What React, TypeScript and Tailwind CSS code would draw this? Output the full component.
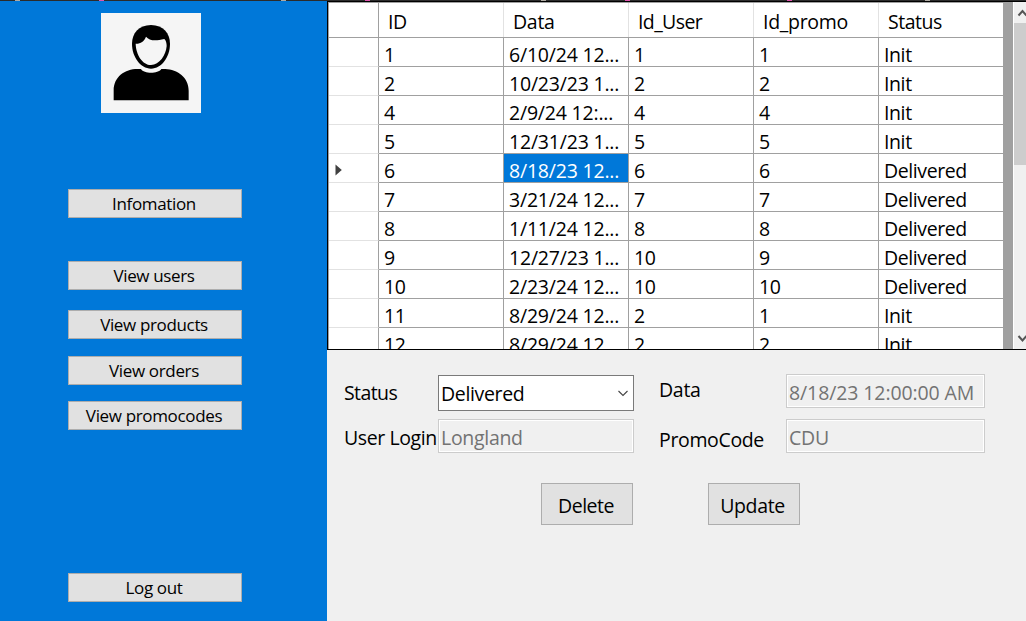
type Order = [string, string, string, string, string];

const columns = [
  { label: "ID", tracking: "tracking-[-0.4px]" },
  { label: "Data", tracking: "tracking-[-0.3px]" },
  { label: "Id_User", tracking: "tracking-[-0.6px]" },
  { label: "Id_promo", tracking: "tracking-[-0.3px]" },
  { label: "Status", tracking: "tracking-[-0.5px]" },
];

const orders: Order[] = [
  ["1", "6/10/24 12...", "1", "1", "Init"],
  ["2", "10/23/23 1...", "2", "2", "Init"],
  ["4", "2/9/24 12:...", "4", "4", "Init"],
  ["5", "12/31/23 1...", "5", "5", "Init"],
  ["6", "8/18/23 12...", "6", "6", "Delivered"],
  ["7", "3/21/24 12...", "7", "7", "Delivered"],
  ["8", "1/11/24 12...", "8", "8", "Delivered"],
  ["9", "12/27/23 1...", "10", "9", "Delivered"],
  ["10", "2/23/24 12...", "10", "10", "Delivered"],
  ["11", "8/29/24 12...", "2", "1", "Init"],
  ["12", "8/29/24 12...", "2", "2", "Init"],
];

const SELECTED_ROW = 4;

function Avatar() {
  return (
    <svg className="mt-3 mr-2 size-[100px] bg-[#f5f5f5]" viewBox="303 39 300 300">
      <path d="M453 75C490 75 510 100 510 132C510 170 485 206 453 206C421 206 396 170 396 132C396 100 416 75 453 75Z" />
      <path fill="#f5f5f5" d="M407 131C420 132 433 124 438 110C448 122 465 124 493 117C498 121 500 130 500 138C498 165 478 195 453 195C428 195 408 165 407 131Z" />
      <path d="M341 301V272C341 230 375 207 412 207H423C432 222 474 222 484 207H496C532 208 566 232 566 272V301Z" />
    </svg>
  );
}

function NavButton({ label, className }: { label: string; className: string }) {
  return (
    <button
      className={`h-[29px] w-[174px] shrink-0 border border-[#adadad] bg-[#e1e1e1] pr-0.5 text-[17px] leading-[27px] tracking-[-0.35px] ${className}`}
    >
      {label}
    </button>
  );
}

function Sidebar() {
  return (
    <aside className="flex w-[327px] shrink-0 flex-col items-center bg-[#0078d9] pr-[17px]">
      <Avatar />
      <NavButton label="Infomation" className="mt-[76px]" />
      <NavButton label="View users" className="mt-[43px]" />
      <NavButton label="View products" className="mt-5" />
      <NavButton label="View orders" className="mt-[17px]" />
      <NavButton label="View promocodes" className="mt-4" />
      <NavButton label="Log out" className="mt-[143px]" />
    </aside>
  );
}

function OrdersTable() {
  return (
    <div className="flex h-[349px] shrink-0 overflow-hidden border-y border-l border-black bg-white">
      <div className="w-[675px] shrink-0 border-t border-l border-[#a0a0a0]">
        <div className="flex h-[35px] border-b border-[#a0a0a0]">
          <div className="w-[50px] shrink-0 border-r border-[#a0a0a0]" />
          {columns.map((c) => (
            <div key={c.label} className={`w-[125px] shrink-0 border-r border-[#e2e2e2] pt-[7px] pl-[9px] leading-6 last:border-r-0 ${c.tracking}`}>
              {c.label}
            </div>
          ))}
        </div>
        {orders.map((row, r) => (
          <div key={row[0]} className="flex h-[29px]">
            <div className="flex w-[50px] shrink-0 items-center border-r border-b border-r-[#a0a0a0] border-b-[#e2e2e2] pl-1.5">
              {r === SELECTED_ROW && (
                <svg className="mt-[3px] h-3 w-[7px]" viewBox="0 0 7 12">
                  <path fill="#404040" d="M0.5 0.5L6.8 6L0.5 11.5Z" />
                </svg>
              )}
            </div>
            {row.map((value, i) => (
              <div
                key={i}
                className={`w-[125px] shrink-0 overflow-hidden border-r border-b border-[#a0a0a0] pt-[5px] pl-[5px] leading-[23px] whitespace-nowrap last:border-r-0 ${
                  i === 1 ? "tracking-[-0.2px]" : "tracking-[-0.4px]"
                } ${r === SELECTED_ROW && i === 1 ? "bg-[#0078d9] text-white" : ""}`}
              >
                {value}
              </div>
            ))}
          </div>
        ))}
      </div>
      <div className="w-[10px] shrink-0 bg-[#a0a0a0]" />
      <div className="ml-px flex w-[17px] shrink-0 flex-col items-center bg-[#f0f0f0]">
        <svg className="h-[21px] w-[17px] shrink-0" viewBox="0 0 17 21" fill="none" stroke="#555" strokeWidth="2">
          <path d="M4.5 13.5L8.5 9L12.5 13.5" />
        </svg>
        <div className="h-[142px] w-full bg-[#cdcdcd]" />
        <svg className="mt-auto h-[21px] w-[17px] shrink-0" viewBox="0 0 17 21" fill="none" stroke="#555" strokeWidth="2">
          <path d="M4.5 8L8.5 12.5L12.5 8" />
        </svg>
      </div>
    </div>
  );
}

function ReadOnlyField({ value, className }: { value: string; className: string }) {
  return (
    <div className={`h-[34px] shrink-0 border border-[#cccccc] ${className}`}>
      <div className="h-full border border-white pt-[5px] pl-px leading-6 text-[#737373]">{value}</div>
    </div>
  );
}

function OrderForm() {
  return (
    <div className="flex flex-1 flex-col">
      <div className="mt-6 flex">
        <div className="w-[111px] shrink-0 pt-[7px] pl-[17px] leading-6 tracking-[-0.6px]">Status</div>
        <div className="mt-px flex h-9 w-[196px] shrink-0 items-center justify-between border border-[#7a7a7a] bg-white pr-1 pl-0.5">
          <span className="pt-0.5 leading-6 tracking-[-0.35px]">Delivered</span>
          <svg className="h-3 w-3" viewBox="0 0 12 12" fill="none" stroke="#444" strokeWidth="1.1">
            <path d="M1.5 4L6 8.5L10.5 4" />
          </svg>
        </div>
        <div className="w-[152px] shrink-0 pt-1 pl-[25px] leading-6 tracking-[-0.3px]">Data</div>
        <ReadOnlyField value="8/18/23 12:00:00 AM" className="w-[199px] tracking-[-0.1px]" />
      </div>
      <div className="mt-2 flex">
        <div className="w-[111px] shrink-0 pt-[7px] pl-[17px] leading-6 tracking-[-0.4px] whitespace-nowrap">User Login</div>
        <ReadOnlyField value="Longland" className="w-[196px] tracking-[-0.3px]" />
        <div className="w-[152px] shrink-0 pt-[9px] pl-[25px] leading-6 tracking-[-0.35px]">PromoCode</div>
        <ReadOnlyField value="CDU" className="w-[199px] tracking-[-0.25px]" />
      </div>
      <div className="mt-[30px] ml-[214px] flex gap-[75px]">
        <button className="h-[42px] w-[92px] border border-[#adadad] bg-[#e1e1e1] pt-[3px] pr-0.5 tracking-[-0.5px]">Delete</button>
        <button className="h-[42px] w-[92px] border border-[#adadad] bg-[#e1e1e1] pt-[3px] pr-[3px] tracking-[-0.35px]">Update</button>
      </div>
    </div>
  );
}

function TopEdge() {
  return (
    <div className="flex h-px shrink-0 bg-[#2b2b2b]">
      <i className="ml-[15px] w-[5px] bg-[#b0aba4]" />
      <i className="ml-[79px] w-[5px] bg-[#e055b0]" />
      <i className="ml-[177px] w-[5px] bg-[#b0aba4]" />
      <i className="ml-[79px] w-[5px] bg-[#e055b0]" />
      <i className="ml-[171px] w-[5px] bg-[#b0aba4]" />
      <i className="ml-[79px] w-[5px] bg-[#e055b0]" />
      <i className="ml-[157px] w-[5px] bg-[#e055b0]" />
      <i className="ml-[133px] w-[5px] bg-[#b0aba4]" />
    </div>
  );
}

export default function App() {
  return (
    <div className="flex h-[621px] w-[1026px] flex-col overflow-hidden bg-[#f0f0f0] font-['Open_Sans','Noto_Sans',sans-serif] text-[19.5px] text-black">
      <TopEdge />
      <div className="flex min-h-0 flex-1">
        <Sidebar />
        <main className="flex min-w-0 flex-1 flex-col">
          <OrdersTable />
          <OrderForm />
        </main>
      </div>
    </div>
  );
}
